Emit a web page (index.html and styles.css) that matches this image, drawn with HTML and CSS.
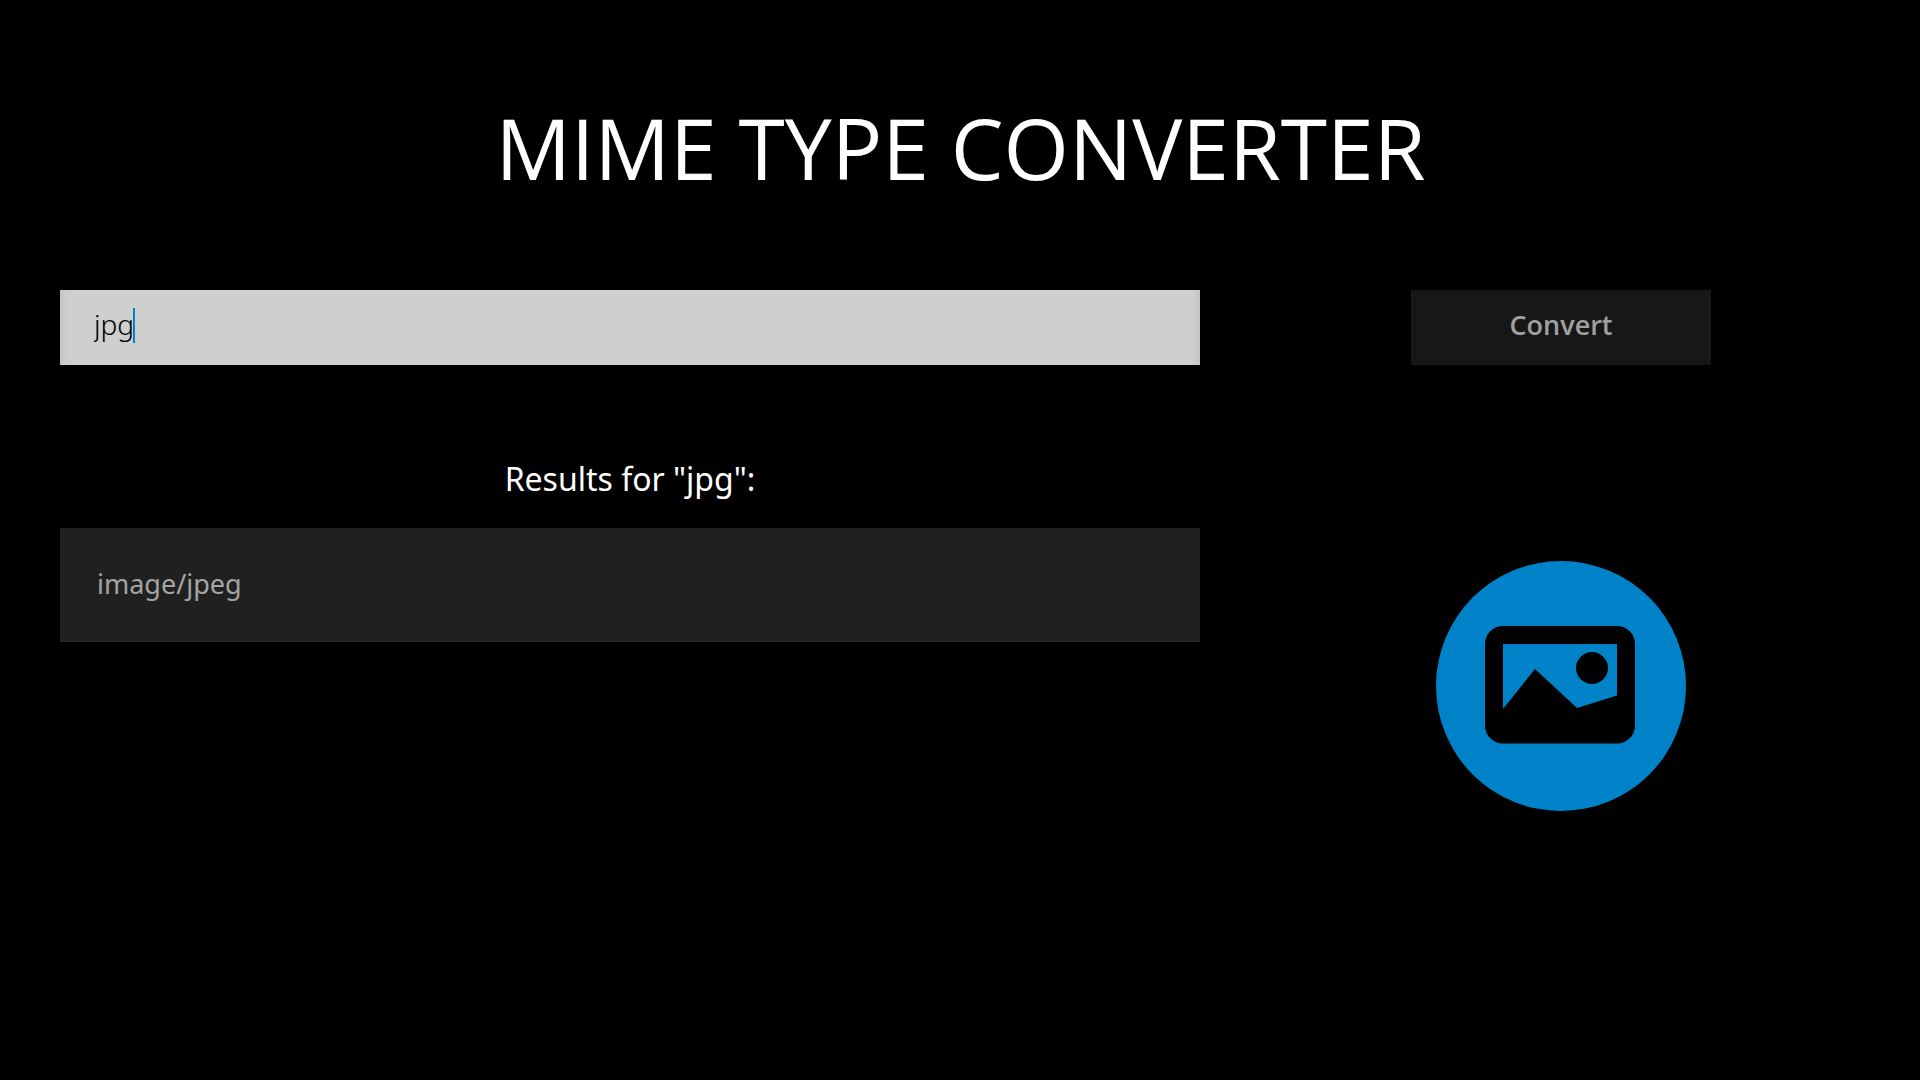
FILE: index.html
```html
<!DOCTYPE html>
<html lang="en">
<head>
<meta charset="utf-8">
<title>MIME Type Converter</title>
<link rel="stylesheet" href="styles.css">
</head>
<body>
<main class="page">
  <h1 class="title">MIME TYPE CONVERTER</h1>
  <form class="row">
    <div class="field">
      <input class="query" type="text" value="jpg" aria-label="File extension">
      <span class="caret"></span>
    </div>
    <button class="convert" type="button">Convert</button>
  </form>
  <div class="row">
    <section class="results">
      <h2 class="results-title">Results for "jpg":</h2>
      <ul class="result-list">
        <li class="result">image/jpeg</li>
      </ul>
    </section>
    <svg class="type-icon" viewBox="0 0 250 250" role="img" aria-label="Image">
      <circle cx="125" cy="125" r="125" fill="#0082c8"/>
      <rect x="49" y="65" width="150" height="117.500" rx="18" fill="#000"/>
      <path d="M67 83H181V134.500L141 147L99 108L67 148Z" fill="#0082c8"/>
      <circle cx="156" cy="107" r="16" fill="#000"/>
    </svg>
  </div>
</main>
</body>
</html>
```
FILE: styles.css
```css
* {
  box-sizing: border-box;
}

body {
  margin: 0;
  background: #000;
  color: #fff;
  font-family: "Noto Sans", "Open Sans", sans-serif;
}

.page {
  padding: 88px 59px 60px 60px;
}

.title {
  margin: 0 0 82px;
  font-family: "Open Sans", "Noto Sans", sans-serif;
  font-size: 84px;
  line-height: 120px;
  font-weight: 400;
  text-align: center;
}

.row {
  display: grid;
  grid-template-columns: 19fr 10fr;
  column-gap: 61px;
  justify-items: center;
  margin-bottom: 90px;
}

.field {
  position: relative;
  width: 100%;
}

.query {
  display: block;
  width: 100%;
  height: 75px;
  padding: 0 34px 7px;
  border: 0;
  border-radius: 0;
  outline: 0;
  background: #cfcfcf;
  box-shadow: inset 8px 0 4px -4px #c6c6c6, inset -8px 0 4px -4px #c6c6c6;
  color: #000;
  font: 300 28px "Noto Sans", "Open Sans", sans-serif;
}

.caret {
  position: absolute;
  left: 73px;
  top: 18px;
  width: 2px;
  height: 35px;
  background: #0082c8;
}

.convert {
  width: 300px;
  height: 75px;
  padding: 0 0 6px;
  border: 0;
  background: #171717;
  color: #a0a0a0;
  font: 600 27px "Open Sans", "Noto Sans", sans-serif;
}

.results {
  width: 100%;
}

.results-title {
  margin: 0 0 25px;
  font-size: 32px;
  line-height: 48px;
  font-weight: 400;
  text-align: center;
}

.result-list {
  margin: 0;
  padding: 0;
  list-style: none;
}

.result {
  padding: 35px 37px 36px;
  border-bottom: 1px solid #292929;
  background: #202020;
  color: #a4a4a4;
  font-size: 27px;
  line-height: 42px;
}

.type-icon {
  width: 250px;
  height: 250px;
  margin-top: 106px;
}
```
